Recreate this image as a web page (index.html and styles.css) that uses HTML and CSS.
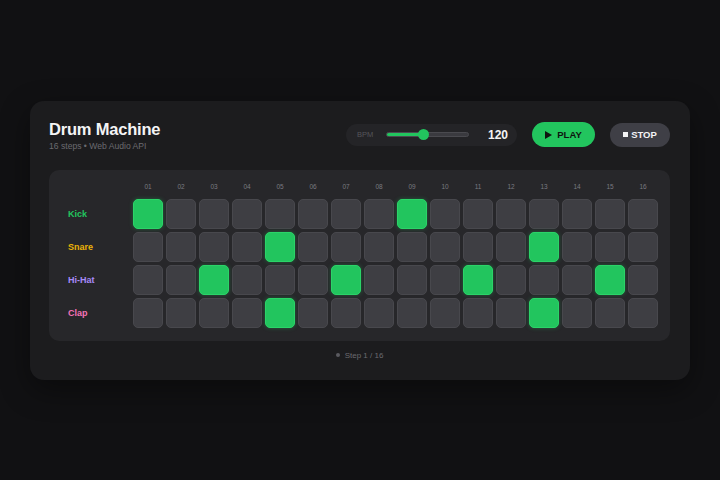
FILE: index.html
```html
<!DOCTYPE html>
<html>
<head>
<meta charset="utf-8">
<link rel="stylesheet" href="styles.css">
</head>
<body>
<div class="card">
  <div class="header">
    <div class="titles">
      <h1 class="title">Drum Machine</h1>
      <div class="subtitle">16 steps • Web Audio API</div>
    </div>
    <div class="controls">
      <div class="bpm">
        <span class="bpm-label">BPM</span>
        <div class="slider"><div class="fill"></div><div class="thumb"></div></div>
        <span class="bpm-value">120</span>
      </div>
      <button class="btn play"><span class="tri"></span>PLAY</button>
      <button class="btn stop"><span class="sq"></span>STOP</button>
    </div>
  </div>
  <div class="panel">
    <div class="grid" id="grid"></div>
  </div>
  <div class="footer"><span class="dot"></span>Step 1 / 16</div>
</div>
<script src="app.js"></script>
</body>
</html>
```
FILE: app.js
```js
const grid = document.getElementById('grid');
const rows = [
  ['Kick', 'kick', [1, 9]],
  ['Snare', 'snare', [5, 13]],
  ['Hi-Hat', 'hihat', [3, 7, 11, 15]],
  ['Clap', 'clap', [5, 13]]
];
let html = '<div class="lbl"></div>';
for (let i = 1; i <= 16; i++) html += '<div class="num">' + String(i).padStart(2, '0') + '</div>';
for (const [name, cls, on] of rows) {
  html += '<div class="lbl ' + cls + '">' + name + '</div>';
  for (let i = 1; i <= 16; i++) html += '<div class="cell' + (on.includes(i) ? ' on' : '') + '"></div>';
}
grid.innerHTML = html;
```
FILE: styles.css
```css
* { box-sizing: border-box; }
html, body { margin: 0; height: 100%; }
body {
  background: #111113;
  font-family: "Liberation Sans", Arial, sans-serif;
  display: flex;
  align-items: center;
  justify-content: center;
}
.card {
  width: 660px;
  height: 279px;
  background: #1c1c1e;
  border-radius: 14px;
  padding: 17px 20px 0 19px;
  box-shadow: 0 10px 30px rgba(0,0,0,0.4);
}
.header {
  display: flex;
  align-items: center;
  justify-content: space-between;
}
.title {
  margin: 0;
  font-size: 16.5px;
  font-weight: 700;
  color: #f4f4f5;
  line-height: 22px;
  letter-spacing: -0.2px;
}
.subtitle {
  font-size: 8.6px;
  color: #6b6b70;
  line-height: 12px;
}
.controls {
  display: flex;
  align-items: center;
  gap: 15px;
}
.bpm {
  width: 171px;
  height: 22px;
  border-radius: 11px;
  background: #242427;
  display: flex;
  align-items: center;
  padding: 0 9px 0 11px;
}
.bpm-label {
  font-size: 7.5px;
  color: #55555a;
  width: 29px;
}
.slider {
  position: relative;
  width: 83px;
  height: 5px;
  border-radius: 3px;
  background: #3a3a3f;
  border: 1px solid #4a4a4f;
}
.fill {
  width: 36px;
  height: 100%;
  background: #22c55e;
  border-radius: 3px;
}
.thumb {
  position: absolute;
  left: 31px;
  top: -4px;
  width: 11px;
  height: 11px;
  border-radius: 50%;
  background: #22c55e;
}
.bpm-value {
  margin-left: auto;
  font-size: 12px;
  font-weight: 700;
  color: #f4f4f5;
}
.btn {
  border: none;
  font-family: inherit;
  font-weight: 700;
  font-size: 9.5px;
  border-radius: 13px;
  display: flex;
  align-items: center;
  justify-content: center;
}
.play {
  width: 63px;
  height: 25px;
  background: #22c55e;
  color: #0f1410;
  gap: 5px;
}
.tri {
  width: 0; height: 0;
  border-left: 7px solid #0f1410;
  border-top: 4px solid transparent;
  border-bottom: 4px solid transparent;
}
.stop {
  width: 60px;
  height: 24px;
  background: #3f3f46;
  color: #f4f4f5;
  gap: 3px;
}
.sq {
  width: 5px; height: 5px;
  background: #f4f4f5;
}
.panel {
  margin-top: 18px;
  height: 171px;
  background: #27272a;
  border-radius: 10px;
  padding: 12px 13px 0 19px;
}
.grid {
  display: grid;
  grid-template-columns: 62px repeat(16, 30px);
  grid-template-rows: 14px repeat(4, 30px);
  column-gap: 3px;
  row-gap: 3px;
}
.num {
  font-size: 6.5px;
  color: #7a7a80;
  text-align: center;
  line-height: 10px;
  align-self: start;
}
.lbl {
  font-size: 9px;
  font-weight: 700;
  display: flex;
  align-items: center;
}
.kick { color: #22c55e; }
.snare { color: #eab308; }
.hihat { color: #a78bfa; }
.clap { color: #f472b6; }
.cell {
  background: #3e3e43;
  border: 1px solid #48484d;
  border-radius: 5px;
}
.cell.on {
  background: #22c55e;
  border-color: #2bd468;
  box-shadow: 0 0 4px rgba(34,197,94,0.35);
}
.footer {
  margin-top: 10px;
  text-align: center;
  font-size: 8px;
  color: #6b6b70;
  display: flex;
  justify-content: center;
  align-items: center;
  gap: 5px;
}
.dot {
  width: 4px; height: 4px;
  border-radius: 50%;
  background: #5a5a60;
}
```
